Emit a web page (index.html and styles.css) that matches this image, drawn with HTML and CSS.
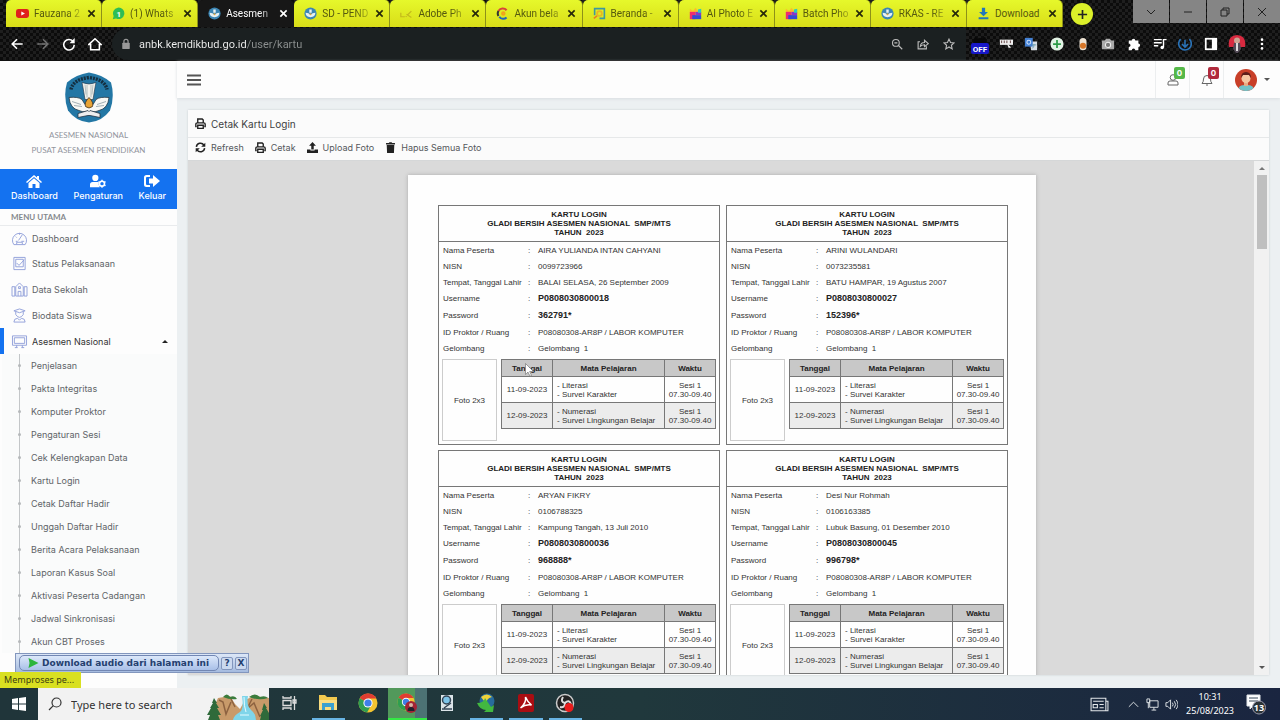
FILE: index.html
```html
<!DOCTYPE html>
<html lang="id">
<head>
<meta charset="utf-8">
<title>Asesmen Nasional - Cetak Kartu Login</title>
<link rel="stylesheet" href="styles.css">
</head>
<body>
<svg class="defs" aria-hidden="true">
  <symbol id="i-printer" viewBox="0 0 16 16"><path d="M4 7V1.500h6.500L12 3v4M2.500 12.500H1.200V9a2 2 0 0 1 2-2h9.600a2 2 0 0 1 2 2v3.500H13.500M4 10.500h8V15H4z" fill="none" stroke="currentColor" stroke-width="2"/></symbol>
  <symbol id="i-refresh" viewBox="0 0 16 16"><path d="M2 7a6 6 0 0 1 11-2.500M14 9a6 6 0 0 1-11 2.500" fill="none" stroke="currentColor" stroke-width="2.200"/><path d="M15 1v6H9zM1 15V9h6z" fill="currentColor"/></symbol>
  <symbol id="i-upload" viewBox="0 0 16 16"><path d="M8 0l5 5.500H9.800V11H6.200V5.500H3zM0 11h5v1.500h6V11h5v5H0z" fill="currentColor"/></symbol>
  <symbol id="i-trash" viewBox="0 0 16 16"><path d="M1.500 1.500h4L6.500.500h3l1 1h4V3.500h-13zM2.500 4.500h11L13 16H3z" fill="currentColor"/></symbol>
  <symbol id="i-kemdik" viewBox="0 0 16 16"><circle cx="8" cy="8" r="7.500" fill="#3c86b4"/><path d="M6.500 3h3v4h-3zM2 7q4 0 6 2.500Q10 7 14 7q0 5-6 5.500Q2 12 2 7z" fill="#e8f0f0"/><circle cx="8" cy="9" r="1.200" fill="#d9a544"/></symbol>
  <symbol id="i-photo" viewBox="0 0 16 16"><path d="M1 2l4 3 3-4 3 4 4-3v5H1z" fill="#ffb82e"/><path d="M1 6h7v9H1z" fill="#ee2c70"/><path d="M8 6h7v4H8z" fill="#8b35c9"/><path d="M4 10h11v5H4z" fill="#3449d6"/><path d="M11 3l4-1v5h-4z" fill="#2cc8c0"/></symbol>
  <symbol id="i-close" viewBox="0 0 10 10"><path d="M1.500 1.500l7 7m0-7l-7 7" fill="none" stroke="currentColor" stroke-width="1.800"/></symbol>
  <symbol id="i-chrome" viewBox="0 0 20 20"><circle cx="10" cy="10" r="9.500" fill="#f4c430"/><path d="M10 10L1.800 5.200A9.500 9.500 0 0 1 18.300 5.500H10z" fill="#e03c31"/><path d="M10 10L1.800 5.200A9.500 9.500 0 0 0 9 19.500l4-7z" fill="#2f9e50"/><circle cx="10" cy="10" r="4.600" fill="#fff"/><circle cx="10" cy="10" r="3.600" fill="#3f7fe8"/></symbol>
</svg>

<header class="browser">
  <div class="tabstrip">
    <nav class="tabs" aria-label="Tab">
      <div class="tab"><svg class="fav" viewBox="0 0 16 16"><rect y="2.500" width="16" height="11" rx="3" fill="#e0201c"/><path d="M6.500 5.500v5L11 8z" fill="#fff"/></svg><a href="#">Fauzana 2</a><button aria-label="Tutup"><svg><use href="#i-close"/></svg></button></div>
      <div class="tab"><svg class="fav" viewBox="0 0 16 16"><path d="M1 15l1-4a7 7 0 1 1 3 3z" fill="#2ebd55"/><text x="8.500" y="12" class="favnum">1</text></svg><a href="#">(1) Whats</a><button aria-label="Tutup"><svg><use href="#i-close"/></svg></button></div>
      <div class="tab active"><svg class="fav"><use href="#i-kemdik"/></svg><a href="#">Asesmen</a><button aria-label="Tutup"><svg><use href="#i-close"/></svg></button></div>
      <div class="tab"><svg class="fav"><use href="#i-kemdik"/></svg><a href="#">SD - PEND</a><button aria-label="Tutup"><svg><use href="#i-close"/></svg></button></div>
      <div class="tab"><svg class="fav" viewBox="0 0 16 16"><path d="M1 7v5h5M7 12l7-7M8 9l6 4" fill="none" stroke="#c3b91d" stroke-width="1.500"/></svg><a href="#">Adobe Ph</a><button aria-label="Tutup"><svg><use href="#i-close"/></svg></button></div>
      <div class="tab"><svg class="fav" viewBox="0 0 16 16" fill="none" stroke-width="2.500"><path d="M13 4A6 6 0 0 0 3 5" stroke="#d8433a"/><path d="M3 5a6 6 0 0 0 0 6" stroke="#333"/><path d="M4 12a6 6 0 0 0 9 1" stroke="#2366b8"/><circle cx="9" cy="8" r="1.500" stroke="#f0a31c"/></svg><a href="#">Akun bela</a><button aria-label="Tutup"><svg><use href="#i-close"/></svg></button></div>
      <div class="tab"><svg class="fav" viewBox="0 0 16 16" fill="none" stroke-width="2"><path d="M2 10V2h12v12H8" stroke="#3d98a0"/><circle cx="8" cy="8" r="3" stroke="#e9b524"/><path d="M1 14l4-3" stroke="#e77c27"/></svg><a href="#">Beranda -</a><button aria-label="Tutup"><svg><use href="#i-close"/></svg></button></div>
      <div class="tab"><svg class="fav"><use href="#i-photo"/></svg><a href="#">AI Photo E</a><button aria-label="Tutup"><svg><use href="#i-close"/></svg></button></div>
      <div class="tab"><svg class="fav"><use href="#i-photo"/></svg><a href="#">Batch Pho</a><button aria-label="Tutup"><svg><use href="#i-close"/></svg></button></div>
      <div class="tab"><svg class="fav"><use href="#i-kemdik"/></svg><a href="#">RKAS - RE</a><button aria-label="Tutup"><svg><use href="#i-close"/></svg></button></div>
      <div class="tab"><svg class="fav" viewBox="0 0 16 16"><path d="M6 1h4v5h3.500L8 11.500 2.500 6H6zM2 12.500h12V15H2z" fill="#2478b8"/></svg><a href="#" class="full">Download</a><button aria-label="Tutup"><svg><use href="#i-close"/></svg></button></div>
    </nav>
    <button class="newtab" aria-label="Tab baru"><svg viewBox="0 0 12 12"><path d="M6 1v10M1 6h10" stroke="#222" stroke-width="1.800"/></svg></button>
    <div class="winctl">
      <button aria-label="Cari tab"><svg viewBox="0 0 12 12"><path d="M2 4l4 4 4-4"/></svg></button>
      <button aria-label="Minimalkan"><svg viewBox="0 0 12 12"><path d="M2 6h8"/></svg></button>
      <button aria-label="Pulihkan"><svg viewBox="0 0 12 12"><path d="M2 4h6v6H2zM4 4V2h6v6H8"/></svg></button>
      <button aria-label="Tutup jendela"><svg viewBox="0 0 12 12"><path d="M2 2l8 8m0-8l-8 8"/></svg></button>
    </div>
  </div>
  <div class="toolbar">
    <div class="nav">
      <button aria-label="Kembali"><svg viewBox="0 0 16 16"><path d="M14.500 8H3M8 2.500L2.500 8 8 13.500"/></svg></button>
      <button class="dim" aria-label="Maju"><svg viewBox="0 0 16 16"><path d="M1.500 8H13M8 2.500L13.500 8 8 13.500"/></svg></button>
      <button aria-label="Muat ulang"><svg viewBox="0 0 16 16"><path d="M13 5.500A6 6 0 1 0 14 9"/><path d="M14.500 1v6h-6z" fill="#fff" stroke="none"/></svg></button>
      <button aria-label="Beranda"><svg viewBox="0 0 16 16"><path d="M1 8.500L8 2l7 6.500h-2V14.500H3V8.500z"/></svg></button>
    </div>
    <div class="omnibox">
      <svg class="lock" viewBox="0 0 12 14"><path d="M3.500 6V4a2.500 2.500 0 0 1 5 0v2" fill="none" stroke="#999" stroke-width="1.500"/><rect x="1.500" y="5.500" width="9" height="7.500" rx="1" fill="#999"/></svg>
      <input class="url" type="text" aria-label="Alamat" value="anbk.kemdikbud.go.id/user/kartu">
      <button aria-label="Zoom"><svg viewBox="0 0 16 16"><circle cx="6.500" cy="6.500" r="4.500"/><path d="M10 10l5 5M4.500 6.500h4"/></svg></button>
      <button aria-label="Bagikan"><svg viewBox="0 0 16 16"><path d="M4 5H1.500v9.500h11V11M4.500 11q.500-5 5.500-5V3l5 4.500-5 4V9q-3.500 0-5.500 2z"/></svg></button>
      <button aria-label="Bookmark"><svg viewBox="0 0 16 16"><path d="M8 1.500l2 4.500 4.800.500-3.600 3.200 1 4.800L8 12l-4.200 2.500 1-4.800L1.200 6.500 6 6z"/></svg></button>
    </div>
    <div class="exts">
      <button aria-label="IDM"><svg viewBox="0 0 20 20"><path d="M4 5q1-4 3 0 3-2 6 0 2-4 3 0l1 5H3z" fill="#080808"/><rect x="1" y="9" width="18" height="11" rx="2" fill="#1717c8"/><text x="10" y="18" class="off">OFF</text></svg></button>
      <button aria-label="Pray"><svg viewBox="0 0 16 16"><rect x="1" y="3" width="15" height="6" fill="#eee"/><path d="M3 4v3M6 4v3M9 4v3M13 4v3" stroke="#533"/><path d="M9 7l5 5-3 .500L12 15" fill="#eee"/></svg></button>
      <button aria-label="Terjemahkan"><svg viewBox="0 0 16 16"><path d="M7 5h8v10H8z" fill="#d6dde4"/><rect x="1" y="1" width="9" height="10" fill="#4380d3"/><circle cx="5.500" cy="6" r="2.200" fill="none" stroke="#cfe0fa" stroke-width="1.200"/><path d="M9 9h5M11.500 8q0 4-2 5" stroke="#69a" fill="none"/></svg></button>
      <button aria-label="Tambah"><svg viewBox="0 0 16 16"><circle cx="8" cy="8" r="7.500" fill="#e2f3e5"/><path d="M8 3.500v9M3.500 8h9" stroke="#2c9b47" stroke-width="2"/></svg></button>
      <button aria-label="Tetes"><svg viewBox="0 0 16 16"><rect x="4" y="1" width="8" height="14" rx="4" fill="#eee4d5"/><circle cx="8" cy="10" r="3.500" fill="#d67628"/></svg></button>
      <button aria-label="Kamera"><svg viewBox="0 0 16 16"><path d="M1 4h3l2-2h4l2 2h3v10H1z" fill="#aaa"/><circle cx="8" cy="9" r="3" fill="#777" stroke="#eee" stroke-width="1.200"/></svg></button>
      <button aria-label="Ekstensi"><svg viewBox="0 0 16 16"><path d="M2 4h3.500a2 2 0 1 1 4 0H13v3.500a2 2 0 1 1 0 4V15H9.500a2 2 0 0 0-4 0H2v-3.500a2 2 0 0 0 0-4z" fill="#fff"/></svg></button>
      <button aria-label="Media"><svg viewBox="0 0 16 16"><path d="M1 3h9M1 6.500h9M1 10h5" stroke="#fff" stroke-width="1.600"/><path d="M12 12V3h3.500" fill="none" stroke="#fff" stroke-width="1.600"/><circle cx="10.500" cy="12" r="2" fill="#fff"/></svg></button>
      <button aria-label="Unduhan"><svg viewBox="0 0 16 16"><path d="M3 2.500A7.200 7.200 0 1 0 13 2.500M8 3v8M4.500 8L8 11.500 11.500 8" fill="none" stroke="#2a73b8" stroke-width="1.800"/></svg></button>
      <button aria-label="Panel samping"><svg viewBox="0 0 16 16"><rect x="2" y="2" width="12" height="12" fill="none" stroke="#fff" stroke-width="2"/><path d="M9 2h5v12H9z" fill="#fff"/></svg></button>
      <button aria-label="Profil"><svg class="big" viewBox="0 0 18 18"><path d="M1 12Q-1 1 9 0q10 1 8 12H1z" fill="#d82a40"/><circle cx="9" cy="5.500" r="3" fill="#caa695"/><path d="M6 8h6l1 6-3 4H8l-3-4z" fill="#554c58"/><path d="M8 8h2v8H8z" fill="#ddd"/></svg></button>
      <button aria-label="Menu"><svg viewBox="0 0 16 16" fill="#fff"><circle cx="8" cy="3" r="1.500"/><circle cx="8" cy="8" r="1.500"/><circle cx="8" cy="13" r="1.500"/></svg></button>
    </div>
  </div>
</header>

<div class="app">
  <aside class="sidebar">
    <div class="brand">
      <svg class="logo" viewBox="0 0 50 50"><path d="M25 0Q38 2 47 10 51 24 46 38 38 49 25 50 12 49 4 38-1 24 3 10 12 2 25 0z" fill="#2377a5"/><path d="M7 17Q9 7 25 5 41 7 43 17" fill="none" stroke="#142f40" stroke-width="3.500" stroke-dasharray="2 1"/><path d="M18 10q7 3 14 0l-1 5-2 12h-8l-2-12z" fill="#f4f3ed" stroke="#234" stroke-width=".6"/><path d="M23 12v13M27 12v13M21 12l1 10M29 12l-1 10" stroke="#9aa9ad" stroke-width=".7"/><path d="M5 25q9-1 13 2l3 5h8l3-5q4-3 13-2-1 11-10 13-4 2-7 1H22q-3 1-7-1Q6 36 5 25z" fill="#f8f8f4" stroke="#263846" stroke-width=".8"/><path d="M8 29l9 3M10 33l8 1M42 29l-9 3M40 33l-8 1" stroke="#8c9ca3" stroke-width=".8"/><path d="M25 25q5 5 3.500 9-3.500 3-7 0Q20 30 25 25z" fill="#e7a334" stroke="#432" stroke-width=".8"/><path d="M14 41l10-3 1 1 1-1 10 3v4l-10-2h-2l-10 2z" fill="#eee" stroke="#234" stroke-width=".8"/></svg>
      <p>ASESMEN NASIONAL</p>
      <p>PUSAT ASESMEN PENDIDIKAN</p>
    </div>
    <nav class="quick" aria-label="Pintasan">
      <a href="#"><svg viewBox="0 0 16 14"><path d="M8 1L0 8l1 1 7-6 7 6 1-1-3-2.700V2h-2v1.500zM8 4.200L2.500 9v5h4v-4h3v4h4V9z"/></svg>Dashboard</a>
      <a href="#"><svg viewBox="0 0 18 14"><circle cx="6" cy="3.500" r="3.500"/><path d="M0 14v-3q0-3 3-3h6q1 0 1 1-1 3 1 5z"/><circle cx="13.500" cy="10" r="2.800" fill="none" stroke="#fff" stroke-width="1.800"/><path d="M13.500 5.500v2M13.500 12.500v2M9.500 7.700l1.700 1M15.800 11.300l1.700 1M9.500 12.300l1.700-1M15.800 8.700l1.700-1" stroke="#fff" stroke-width="1.500"/></svg>Pengaturan</a>
      <a href="#"><svg viewBox="0 0 16 14"><path d="M6 1H2.500Q0 1 0 3.500v7Q0 13 2.500 13H6v-2H3q-1 0-1-1V4q0-1 1-1h3zM9 1l7 6-7 6V9.500H5v-5h4z"/></svg>Keluar</a>
    </nav>
    <h2 class="menu-title">MENU UTAMA</h2>
    <ul class="menu">
      <li><a href="#"><svg viewBox="0 0 18 16"><path d="M3 14.500a7.500 7.500 0 1 1 12 0zM5 11h2M11 11h3M8 10l4-6M5 6l1 1M9 2v2M6 14v-2h6v2"/></svg>Dashboard</a></li>
      <li><a href="#"><svg viewBox="0 0 18 16"><path d="M3 1.500h12v13H3zM5 3.500h8v8H5zM6 7.500l2.500 2.500L14 4"/></svg>Status Pelaksanaan</a></li>
      <li><a href="#"><svg viewBox="0 0 18 16"><path d="M1 5v10h3V5zM14 5v10h3V5zM5 15V5l4-4 4 4v10zM7.500 15v-5h3v5M8 5h2v2H8z"/></svg>Data Sekolah</a></li>
      <li><a href="#"><svg viewBox="0 0 18 16"><path d="M3 3l6-2 6 2-6 2zM5 4v3q4 6 8 0V4M3 15q0-4 4-4l2 2 2-2q4 0 4 4z"/></svg>Biodata Siswa</a></li>
      <li class="open"><a href="#"><svg viewBox="0 0 18 16"><path d="M1.500 2h15v10h-15zM3.500 4h11v6h-11zM6 12v2.500M12 12v2.500M4 14.500h3M11 14.500h3"/></svg>Asesmen Nasional<i class="caret-up"></i></a>
        <ul class="submenu">
          <li><a href="#">Penjelasan</a></li>
          <li><a href="#">Pakta Integritas</a></li>
          <li><a href="#">Komputer Proktor</a></li>
          <li><a href="#">Pengaturan Sesi</a></li>
          <li><a href="#">Cek Kelengkapan Data</a></li>
          <li><a href="#">Kartu Login</a></li>
          <li><a href="#">Cetak Daftar Hadir</a></li>
          <li><a href="#">Unggah Daftar Hadir</a></li>
          <li><a href="#">Berita Acara Pelaksanaan</a></li>
          <li><a href="#">Laporan Kasus Soal</a></li>
          <li><a href="#">Aktivasi Peserta Cadangan</a></li>
          <li><a href="#">Jadwal Sinkronisasi</a></li>
          <li><a href="#">Akun CBT Proses</a></li>
        </ul>
      </li>
    </ul>
  </aside>

  <div class="content">
    <div class="topbar">
      <button class="burger" aria-label="Menu"><svg viewBox="0 0 14 12"><path d="M0 1.500h14M0 6h14M0 10.500h14" stroke="#555" stroke-width="2"/></svg></button>
      <div class="topright">
        <button aria-label="Pengguna"><svg viewBox="0 0 12 12"><circle cx="6" cy="3.500" r="2.800"/><path d="M1 11V9q0-2 2-2h6q2 0 2 2v2z"/></svg><span class="badge green">0</span></button>
        <button aria-label="Pemberitahuan"><svg viewBox="0 0 12 12"><path d="M1 9.500Q2.500 8 2.500 5q0-3.500 3.500-3.500T9.500 5q0 3 1.500 4.500zM5 11h2"/></svg><span class="badge red">0</span></button>
        <button class="account" aria-label="Akun"><svg viewBox="0 0 22 22"><clipPath id="av"><circle cx="11" cy="11" r="11"/></clipPath><g clip-path="url(#av)"><path d="M0 0h22v22H0z" fill="#c83f28"/><path d="M3 22q0-6 6-6h4q6 0 6 6z" fill="#72c3c8"/><path d="M9 12h4v5H9z" fill="#e6ac86"/><circle cx="11" cy="9.500" r="4.500" fill="#f4c7a2"/><path d="M6 9q0-6 5-6t5 6l-2-3H8z" fill="#5e1f1a"/></g></svg><i class="caret-down"></i></button>
      </div>
    </div>

    <main class="panel">
      <h1><svg><use href="#i-printer"/></svg>Cetak Kartu Login</h1>
      <div class="actions">
        <button><svg><use href="#i-refresh"/></svg>Refresh</button>
        <button><svg><use href="#i-printer"/></svg>Cetak</button>
        <button><svg><use href="#i-upload"/></svg>Upload Foto</button>
        <button><svg><use href="#i-trash"/></svg>Hapus Semua Foto</button>
      </div>
      <div class="viewer">
        <div class="scroll">
          <div class="sheet">
            <article class="card">
              <h3>KARTU LOGIN<br>GLADI BERSIH ASESMEN NASIONAL &nbsp;SMP/MTS<br>TAHUN &nbsp;2023</h3>
              <table class="info">
                <tr><th>Nama Peserta</th><td>:</td><td>AIRA YULIANDA INTAN CAHYANI</td></tr>
                <tr><th>NISN</th><td>:</td><td>0099723966</td></tr>
                <tr><th>Tempat, Tanggal Lahir</th><td>:</td><td>BALAI SELASA, 26 September 2009</td></tr>
                <tr class="key"><th>Username</th><td>:</td><td>P0808030800018</td></tr>
                <tr class="key"><th>Password</th><td>:</td><td>362791*</td></tr>
                <tr><th>ID Proktor / Ruang</th><td>:</td><td>P08080308-AR8P / LABOR KOMPUTER</td></tr>
                <tr><th>Gelombang</th><td>:</td><td>Gelombang &nbsp;1</td></tr>
              </table>
              <div class="lower"><div class="foto">Foto 2x3</div>
                <table class="sched">
                  <tr><th>Tanggal</th><th>Mata Pelajaran</th><th>Waktu</th></tr>
                  <tr><td>11-09-2023</td><td>- Literasi<br>- Survei Karakter</td><td>Sesi 1<br>07.30-09.40</td></tr>
                  <tr><td>12-09-2023</td><td>- Numerasi<br>- Survei Lingkungan Belajar</td><td>Sesi 1<br>07.30-09.40</td></tr>
                </table>
                <svg class="cursor" viewBox="0 0 9 14"><path d="M.500.500v11l2.500-2.300 2 4 1.500-.700-1.800-4H8.500z" fill="#fff" stroke="#777" stroke-width=".7"/></svg>
              </div>
            </article>
            <article class="card">
              <h3>KARTU LOGIN<br>GLADI BERSIH ASESMEN NASIONAL &nbsp;SMP/MTS<br>TAHUN &nbsp;2023</h3>
              <table class="info">
                <tr><th>Nama Peserta</th><td>:</td><td>ARINI WULANDARI</td></tr>
                <tr><th>NISN</th><td>:</td><td>0073235581</td></tr>
                <tr><th>Tempat, Tanggal Lahir</th><td>:</td><td>BATU HAMPAR, 19 Agustus 2007</td></tr>
                <tr class="key"><th>Username</th><td>:</td><td>P0808030800027</td></tr>
                <tr class="key"><th>Password</th><td>:</td><td>152396*</td></tr>
                <tr><th>ID Proktor / Ruang</th><td>:</td><td>P08080308-AR8P / LABOR KOMPUTER</td></tr>
                <tr><th>Gelombang</th><td>:</td><td>Gelombang &nbsp;1</td></tr>
              </table>
              <div class="lower"><div class="foto">Foto 2x3</div>
                <table class="sched">
                  <tr><th>Tanggal</th><th>Mata Pelajaran</th><th>Waktu</th></tr>
                  <tr><td>11-09-2023</td><td>- Literasi<br>- Survei Karakter</td><td>Sesi 1<br>07.30-09.40</td></tr>
                  <tr><td>12-09-2023</td><td>- Numerasi<br>- Survei Lingkungan Belajar</td><td>Sesi 1<br>07.30-09.40</td></tr>
                </table>
              </div>
            </article>
            <article class="card">
              <h3>KARTU LOGIN<br>GLADI BERSIH ASESMEN NASIONAL &nbsp;SMP/MTS<br>TAHUN &nbsp;2023</h3>
              <table class="info">
                <tr><th>Nama Peserta</th><td>:</td><td>ARYAN FIKRY</td></tr>
                <tr><th>NISN</th><td>:</td><td>0106788325</td></tr>
                <tr><th>Tempat, Tanggal Lahir</th><td>:</td><td>Kampung Tangah, 13 Juli 2010</td></tr>
                <tr class="key"><th>Username</th><td>:</td><td>P0808030800036</td></tr>
                <tr class="key"><th>Password</th><td>:</td><td>968888*</td></tr>
                <tr><th>ID Proktor / Ruang</th><td>:</td><td>P08080308-AR8P / LABOR KOMPUTER</td></tr>
                <tr><th>Gelombang</th><td>:</td><td>Gelombang &nbsp;1</td></tr>
              </table>
              <div class="lower"><div class="foto">Foto 2x3</div>
                <table class="sched">
                  <tr><th>Tanggal</th><th>Mata Pelajaran</th><th>Waktu</th></tr>
                  <tr><td>11-09-2023</td><td>- Literasi<br>- Survei Karakter</td><td>Sesi 1<br>07.30-09.40</td></tr>
                  <tr><td>12-09-2023</td><td>- Numerasi<br>- Survei Lingkungan Belajar</td><td>Sesi 1<br>07.30-09.40</td></tr>
                </table>
              </div>
            </article>
            <article class="card">
              <h3>KARTU LOGIN<br>GLADI BERSIH ASESMEN NASIONAL &nbsp;SMP/MTS<br>TAHUN &nbsp;2023</h3>
              <table class="info">
                <tr><th>Nama Peserta</th><td>:</td><td>Desi Nur Rohmah</td></tr>
                <tr><th>NISN</th><td>:</td><td>0106163385</td></tr>
                <tr><th>Tempat, Tanggal Lahir</th><td>:</td><td>Lubuk Basung, 01 Desember 2010</td></tr>
                <tr class="key"><th>Username</th><td>:</td><td>P0808030800045</td></tr>
                <tr class="key"><th>Password</th><td>:</td><td>996798*</td></tr>
                <tr><th>ID Proktor / Ruang</th><td>:</td><td>P08080308-AR8P / LABOR KOMPUTER</td></tr>
                <tr><th>Gelombang</th><td>:</td><td>Gelombang &nbsp;1</td></tr>
              </table>
              <div class="lower"><div class="foto">Foto 2x3</div>
                <table class="sched">
                  <tr><th>Tanggal</th><th>Mata Pelajaran</th><th>Waktu</th></tr>
                  <tr><td>11-09-2023</td><td>- Literasi<br>- Survei Karakter</td><td>Sesi 1<br>07.30-09.40</td></tr>
                  <tr><td>12-09-2023</td><td>- Numerasi<br>- Survei Lingkungan Belajar</td><td>Sesi 1<br>07.30-09.40</td></tr>
                </table>
              </div>
            </article>
          </div>
        </div>
        <div class="scrollbar"><i class="caret-up"></i><div class="thumb"></div><i class="caret-down"></i></div>
      </div>
    </main>
  </div>

  <div class="grabber">
    <button class="dl"><svg viewBox="0 0 10 10"><path d="M0 0l10 5-10 5 1-5z" fill="#2cb53c"/></svg>Download audio dari halaman ini</button>
    <button class="sq">?</button>
    <button class="sq">X</button>
  </div>
  <div class="status">Memproses pe...</div>
</div>

<footer class="taskbar">
  <button class="start" aria-label="Mulai"><svg viewBox="0 0 14 14"><path d="M0 2l6-1v5.500H0zM7 1l7-1v6.500H7zM0 7.500h6V13l-6-1zM7 7.500h7V14l-7-1z" fill="#fff"/></svg></button>
  <label class="search">
    <svg class="mag" viewBox="0 0 14 14"><circle cx="8.500" cy="5.500" r="4.500" fill="none" stroke="#333" stroke-width="1.200"/><path d="M5.300 8.700L1 13" stroke="#333" stroke-width="1.200"/></svg>
    <input type="search" aria-label="Cari" placeholder="Type here to search">
    <svg class="falls" viewBox="0 0 62 26"><path d="M2 26Q8 10 11 4l12-2 5 8 5 5 5-9 9-4 15 2v22z" fill="#c89a6a"/><path d="M12 6l4 2 3 12 5-12M45 5l-5 10 7-6 6 14M24 5l4 8" fill="none" stroke="#8d6240" stroke-width="1.500"/><path d="M35 2h6q-2 9 3 14 5 4 5 10H26q1-5 7-8 4-3 2-16z" fill="#7fd5ea"/><path d="M37 3q0 10 2 15M33 21h9" stroke="#e5fbff" fill="none"/><path d="M7 4l3 5-1 0 3 5h-2l4 7h-3l2 5H1l2-5H0l4-7H3l3-5H5zM57 9l3 5h-1l3 5v7h-9l1-4h-1l3-6h-1z" fill="#2f6a3a"/><path d="M16 3q4-5 7 0 5-2 7 2-7 1-14-2zM42 3q6-5 11 0 5-2 8 1-9 3-19-1z" fill="#3b7c3c"/></svg>
  </label>
  <div class="apps">
    <button aria-label="Tampilan tugas"><svg viewBox="0 0 20 20"><path d="M4 3v2h8V3M4 17v-2h8v2M4 7.500h8v5H4zM15.500 3v14M14 7h3v3h-3z" fill="none" stroke="#ddd" stroke-width="1.300"/></svg></button>
    <button class="run" aria-label="Explorer"><svg viewBox="0 0 20 20"><path d="M1 2h6l2 2h10v13H1z" fill="#f2c94f"/><path d="M1 7h18v10H1z" fill="#f8dc81"/><path d="M4 10h12v7h-3v-3H7v3H4z" fill="#3aa0d0"/></svg></button>
    <button aria-label="Chrome"><svg><use href="#i-chrome"/></svg></button>
    <button class="current" aria-label="Chrome profil"><svg viewBox="0 0 20 20"><use href="#i-chrome" width="18" height="18"/><circle cx="14" cy="14" r="6" fill="#a32436"/><circle cx="14" cy="12" r="2" fill="#d9b5a2"/><path d="M10.500 18q0-4 3.500-4t3.500 4z" fill="#20222e"/></svg></button>
    <button aria-label="Pengaturan gambar"><svg viewBox="0 0 20 20"><rect x="4" y="2" width="12" height="16" fill="#dce4e8"/><circle cx="9.500" cy="7" r="4" fill="#7ec4e8" stroke="#345" stroke-width="1.500"/><path d="M7 15l7-5M5 16h10" stroke="#345" stroke-width="1.500"/></svg></button>
    <button class="run" aria-label="IDM"><svg viewBox="0 0 20 20"><circle cx="11" cy="8" r="7.500" fill="#286b9c"/><path d="M5 4q6-5 11 0-5 1-6 6-3-3-5-6z" fill="#f0d33a"/><path d="M1 10q7 0 8-5l6 9 3-2-1 7H8l2-2q-6 0-9-7z" fill="#42b840"/></svg></button>
    <button class="run" aria-label="Acrobat"><svg viewBox="0 0 20 20"><rect x="2" y="1" width="16" height="18" rx="2" fill="#a90d12"/><path d="M9.500 4q2 5 6 8-6-1-11 3 6-5 5-11z" fill="none" stroke="#fff" stroke-width="1.500"/></svg></button>
    <button class="run" aria-label="OBS"><svg viewBox="0 0 20 20"><circle cx="10" cy="10" r="8.500" fill="#222" stroke="#ccc" stroke-width="1.500"/><path d="M10 10Q5 9 8 4M10 10q4-4 6 1M10 10q0 5-5 4" fill="none" stroke="#ddd" stroke-width="2"/><circle cx="14" cy="14.500" r="4.500" fill="#e81c1c"/></svg></button>
  </div>
  <div class="tray">
    <button class="news" aria-label="Berita"><svg viewBox="0 0 18 14"><path d="M1 1h14v12H1zM15 4h2v9h-4M3 4h10M3 7h4v3H3zM9 7h4M9 10h4"/></svg></button>
    <button aria-label="Ikon tersembunyi"><svg viewBox="0 0 14 14"><path d="M2 9.500l5-5 5 5"/></svg></button>
    <button aria-label="Jaringan"><svg viewBox="0 0 14 14"><path d="M4 3h9v7H4zM8.500 10v3M6 13h5M1 1h3v4H1zM2.500 5v6"/></svg></button>
    <button aria-label="Volume"><svg viewBox="0 0 14 14"><path d="M1 5h2l3-3v10L3 9H1zM8 5q1.500 2 0 4M10 3.500q3 3.500 0 7M12 2q4 5 0 10"/></svg></button>
    <time class="clock">10:31<br>25/08/2023</time>
    <button class="notif" aria-label="Notifikasi"><svg viewBox="0 0 22 22"><path d="M2 2h13v11H8l-3 3v-3H2z" fill="#fff"/><path d="M4 5h9M4 8h9" stroke="#345"/><circle cx="14" cy="14.500" r="6.500" fill="#2b3338" stroke="#99a" stroke-width="1"/><text x="14" y="18" class="cnt">13</text></svg></button>
  </div>
</footer>
</body>
</html>
```

FILE: styles.css
```css
* { box-sizing: border-box; }
body { margin: 0; height: 100vh; display: flex; flex-direction: column; overflow: hidden; font-family: Inter, "Open Sans", sans-serif; background: #eef2f4; }
button { border: 0; padding: 0; margin: 0; background: none; font: inherit; color: inherit; display: flex; align-items: center; justify-content: center; }
a { color: inherit; text-decoration: none; }
ul { list-style: none; margin: 0; padding: 0; }
h1, h2, h3, p { margin: 0; }
svg { flex: none; display: block; }
.defs { position: absolute; width: 0; height: 0; }

/* Browser window */
.browser { flex: none; font-family: Roboto, "Noto Sans", sans-serif; background: repeating-conic-gradient(#0c0c0c 0 25%, #1e1e1e 0 50%) 0 0 / 6px 6px; border-bottom: 1px solid #111; }
.tabstrip { display: flex; height: 28px; align-items: flex-start; padding-left: 6px; }
.tabs { display: flex; flex: 0 1 1057px; min-width: 0; }
.tab { flex: 1 1 0; min-width: 0; height: 27px; display: flex; align-items: center; padding: 0 5px 0 10px; gap: 5px; background: linear-gradient(#e6f82b, #d9dd18); color: #55580f; font-size: 10px; border-right: 1px solid #8d9118; border-radius: 5px 5px 0 0; }
.tab a { flex: 1; white-space: nowrap; mask-image: linear-gradient(90deg, #000 70%, rgba(0, 0, 0, .3)); }
.tab a.full { mask-image: none; }
.tab.active { background: #171717; color: #fff; border-color: transparent; }
.tab button { width: 10px; color: #27290a; }
.tab.active button { color: #fff; }
.tab button svg { width: 9px; height: 9px; }
.fav { width: 13px; height: 13px; }
.favnum { font-size: 10px; font-weight: 700; fill: #fff; text-anchor: middle; }
.newtab { width: 22px; height: 22px; border-radius: 50%; background: #dcf02a; margin: 3px 0 0 8px; }
.newtab svg { width: 11px; height: 11px; }
.winctl { display: flex; margin-left: auto; gap: 1px; }
.winctl button { width: 36px; height: 23px; background: #858585; }
.winctl svg { width: 12px; height: 12px; fill: none; stroke: #222; stroke-width: 1; }
.toolbar { display: flex; height: 32px; align-items: center; }
.nav { display: flex; padding-left: 4px; }
.nav button { width: 26px; height: 30px; }
.nav svg { width: 14px; height: 14px; fill: none; stroke: #fff; stroke-width: 1.800; }
.nav .dim { opacity: .4; }
.omnibox { flex: 1; height: 32px; display: flex; align-items: center; background: #1b2021; border-radius: 16px 0 0 16px; margin-left: 4px; padding: 0 4px 0 9px; }
.lock { width: 10px; height: 12px; margin-right: 8px; }
.url { flex: 1; border: 0; outline: 0; padding: 0; font: 11px Roboto, "Noto Sans", sans-serif; color: transparent; background: linear-gradient(90deg, #f4f4f4 107px, #8d9191 107px); background-clip: text; -webkit-background-clip: text; }
.omnibox button { width: 26px; }
.omnibox button svg { width: 12px; height: 12px; fill: none; stroke: #bbb; stroke-width: 1.500; }
.exts { display: flex; width: 314px; padding: 0 5px 0 1px; }
.exts button { flex: 1; }
.exts svg { width: 14px; height: 14px; }
.exts button:first-child svg { width: 20px; height: 20px; }
.exts .big { width: 18px; height: 18px; }
.off { font-size: 8px; font-weight: 700; fill: #fff; text-anchor: middle; }

/* Application shell */
.app { flex: 1; min-height: 0; display: flex; position: relative; }
.sidebar { width: 177px; flex: none; background: #fdfdfd; overflow: hidden; color: #606468; font-size: 9px; }
.brand { height: 108px; padding-top: 11px; text-align: center; color: #92959e; font-family: Lato, sans-serif; font-size: 8px; }
.brand p { line-height: 15px; }
.logo { width: 50px; height: 51px; margin: 0 auto 5px; }
.quick { height: 40px; background: #1472f0; color: #fff; display: flex; justify-content: space-between; padding: 5px 11px 0; font-weight: 500; font-size: 9px; }
.quick a { display: flex; flex-direction: column; align-items: center; gap: 2px; line-height: 12px; }
.quick svg { width: 16px; height: 14px; fill: #fff; }
.menu-title { height: 17px; line-height: 16px; padding-left: 11px; font-family: Lato, sans-serif; font-size: 8px; font-weight: 700; color: #85888c; border-bottom: 1px solid #e9ebed; }
.menu > li > a { display: flex; align-items: center; height: 26px; padding: 0 9px 0 11px; gap: 4px; }
.menu > li:nth-child(-n+2) > a { height: 25px; }
.menu > li > a svg { width: 17px; height: 15px; fill: none; stroke: #91a0da; stroke-width: 1; }
.menu > .open > a { border-left: 4px solid #1472f0; padding-left: 7px; color: #333; height: 26px; }
.caret-up, .caret-down { border: 3px solid transparent; width: 0; height: 0; }
.caret-up { border-bottom-color: #222; border-top: 0; }
.caret-down { border-top-color: #555; border-bottom: 0; }
.open .caret-up { margin-left: auto; }
.submenu { background: #fafbfb; margin-left: 2px; padding-left: 17px; }
.submenu li { height: 23px; border-left: 1px solid #c3c6c8; display: flex; align-items: center; line-height: 23px; }
.submenu li::before { content: ""; width: 3px; height: 3px; margin-left: -2px; border-radius: 50%; background: #b5b8ba; margin-right: 10px; }
.content { flex: 1; min-width: 0; display: flex; flex-direction: column; background: #ecf0f2; }
.topbar { height: 37px; flex: none; display: flex; background: #fdfdfd; box-shadow: 0 1px 3px #d8dde0; }
.burger { width: 34px; }
.burger svg { width: 14px; height: 12px; }
.topright { margin-left: auto; display: flex; }
.topright button { width: 34px; border-left: 1px solid #eceeef; position: relative; }
.topright button > svg { width: 12px; height: 12px; fill: none; stroke: #666; stroke-width: 1; }
.badge { position: absolute; left: 18px; top: 6px; width: 11px; height: 12px; border-radius: 2px; color: #fff; font-size: 8px; line-height: 12px; font-weight: 700; }
.green { background: #55b848; }
.red { background: #b02a3c; }
.topright .account { width: 57px; gap: 7px; }
.topright .account > svg { width: 22px; height: 22px; stroke: none; }
.panel { flex: 1; min-height: 0; margin: 12px 11px 13px; display: flex; flex-direction: column; background: #fbfbfb; box-shadow: 0 0 2px #c8cdd0; }
.panel h1 { height: 28px; display: flex; align-items: center; gap: 5px; padding-left: 7px; font-size: 10px; font-weight: 400; color: #3d3f42; border-bottom: 1px solid #e6e8e9; }
.panel h1 svg, .actions svg { width: 11px; height: 11px; color: #222; }
.actions { height: 23px; display: flex; padding: 0 0 3px 7px; gap: 11px; font-size: 9px; color: #55585b; border-bottom: 1px solid #d5d7d8; }
.actions button { gap: 5px; }
.viewer { flex: 1; min-height: 0; display: flex; background: #dadada; }
.scroll { flex: 1; overflow: hidden; padding: 14px 0 0 2px; }
.scrollbar { width: 15px; background: #f1f1f1; display: flex; flex-direction: column; align-items: center; padding: 6px 0; }
.scrollbar .caret-up { border-bottom-color: #777; }
.thumb { width: 10px; height: 74px; background: #bfbfbf; margin: 5px 0 auto; }
.sheet { width: 628px; margin: 0 auto; padding: 30px 28px 30px 30px; background: #fefefe; box-shadow: 0 0 4px #aaa; display: grid; grid-template-columns: 1fr 1fr; gap: 5px 6px; font-family: "Liberation Sans", Arial, sans-serif; font-size: 8px; line-height: 9px; color: #333; }
.card { border: 1px solid #777; height: 240px; }
.card h3 { height: 36px; padding-top: 4px; font-size: 8px; line-height: 9px; text-align: center; color: #222; border-bottom: 1px solid #777; white-space: nowrap; }
.info { border-collapse: collapse; width: 100%; table-layout: fixed; white-space: nowrap; }
.info th { width: 89px; padding: 0 0 0 4px; font-weight: 400; text-align: left; }
.info td { padding: 0; height: 16px; }
.info td:nth-child(2) { width: 10px; }
.info .key td { height: 17px; }
.info .key td:last-child { font-size: 9px; font-weight: 700; color: #222; }
.lower { display: flex; align-items: flex-start; justify-content: space-between; padding: 3px 3px 0; position: relative; }
.foto { width: 55px; height: 82px; border: 1px solid #ccc; display: flex; align-items: center; justify-content: center; }
.sched { width: 215px; border-collapse: collapse; table-layout: fixed; white-space: nowrap; }
.sched th, .sched td { border: 1px solid #777; padding: 0; text-align: center; }
.sched th { height: 17px; background: #c8c8c8; color: #222; }
.sched td { height: 26px; }
.sched th:nth-child(1) { width: 51px; }
.sched th:nth-child(3) { width: 51px; }
.sched td:nth-child(2) { text-align: left; padding-left: 4px; }
.sched tr:last-child td { background: #ececec; }
.cursor { position: absolute; left: 86px; top: 7px; width: 9px; height: 14px; }

/* Floating overlays */
.grabber { position: absolute; left: 15px; bottom: 15px; height: 20px; display: flex; align-items: center; gap: 2px; padding: 0 1px 0 3px; background: linear-gradient(#dce7f7, #a5bbdf); border: 1px solid #8296bd; font: 700 9px "DejaVu Sans", sans-serif; color: #24406f; }
.dl { height: 16px; padding: 0 9px 0 8px; gap: 3px; border: 1px solid #7287b3; border-radius: 5px; background: linear-gradient(#dce8fa, #a9c0e8); white-space: nowrap; }
.dl svg { width: 11px; height: 10px; }
.sq { width: 12px; height: 13px; border: 1px solid #8296bd; border-radius: 2px; background: #cbd9ef; }
.status { position: absolute; left: 0; bottom: 0; width: 81px; height: 16px; padding-left: 4px; line-height: 15px; font-size: 9px; font-family: "Noto Sans", sans-serif; background: #d9e021; color: #3c3f10; white-space: nowrap; }

/* Taskbar */
.taskbar { height: 32px; flex: none; display: flex; background: linear-gradient(90deg, #20353a, #20383c 50%, #1a2540); color: #fff; font-family: "Noto Sans", sans-serif; }
.start { width: 38px; }
.start svg { width: 14px; height: 14px; }
.search { width: 231px; background: #f2f2f2; display: flex; align-items: center; padding-left: 10px; }
.mag { width: 14px; height: 14px; margin-right: 9px; }
.search input { flex: 1; min-width: 0; border: 0; padding: 0; outline: 0; background: none; font: 11px "Noto Sans", sans-serif; }
.search input::placeholder { color: #333; opacity: 1; }
.falls { width: 62px; height: 26px; align-self: flex-end; }
.apps { display: flex; width: 316px; }
.apps button { flex: 1; border-bottom: 2px solid transparent; background-clip: padding-box; }
.apps button svg { width: 20px; height: 20px; }
.apps .run { border-color: #68b4e4; margin: 0 3px; }
.apps .current { background: linear-gradient(90deg, #52995b 70%, #4c7274 70%); border-color: #35e845; }
.apps button:not(.run) { padding: 0 3px; }
.tray { margin-left: auto; display: flex; align-items: center; padding-right: 13px; }
.tray button { width: 19px; }
.tray svg { width: 13px; height: 13px; fill: none; stroke: #e4e8ea; stroke-width: 1; }
.tray .news { margin-right: 15px; }
.tray .news svg { width: 19px; height: 15px; }
.clock { font-size: 9px; line-height: 14px; text-align: center; margin: 0 11px 0 5px; }
.tray .notif { width: 22px; }
.tray .notif svg { width: 22px; height: 22px; stroke-width: 0; }
.tray .notif path, .tray .notif circle { stroke-width: 1; }
.cnt { font-size: 9px; font-weight: 700; fill: #fff; text-anchor: middle; }
```
